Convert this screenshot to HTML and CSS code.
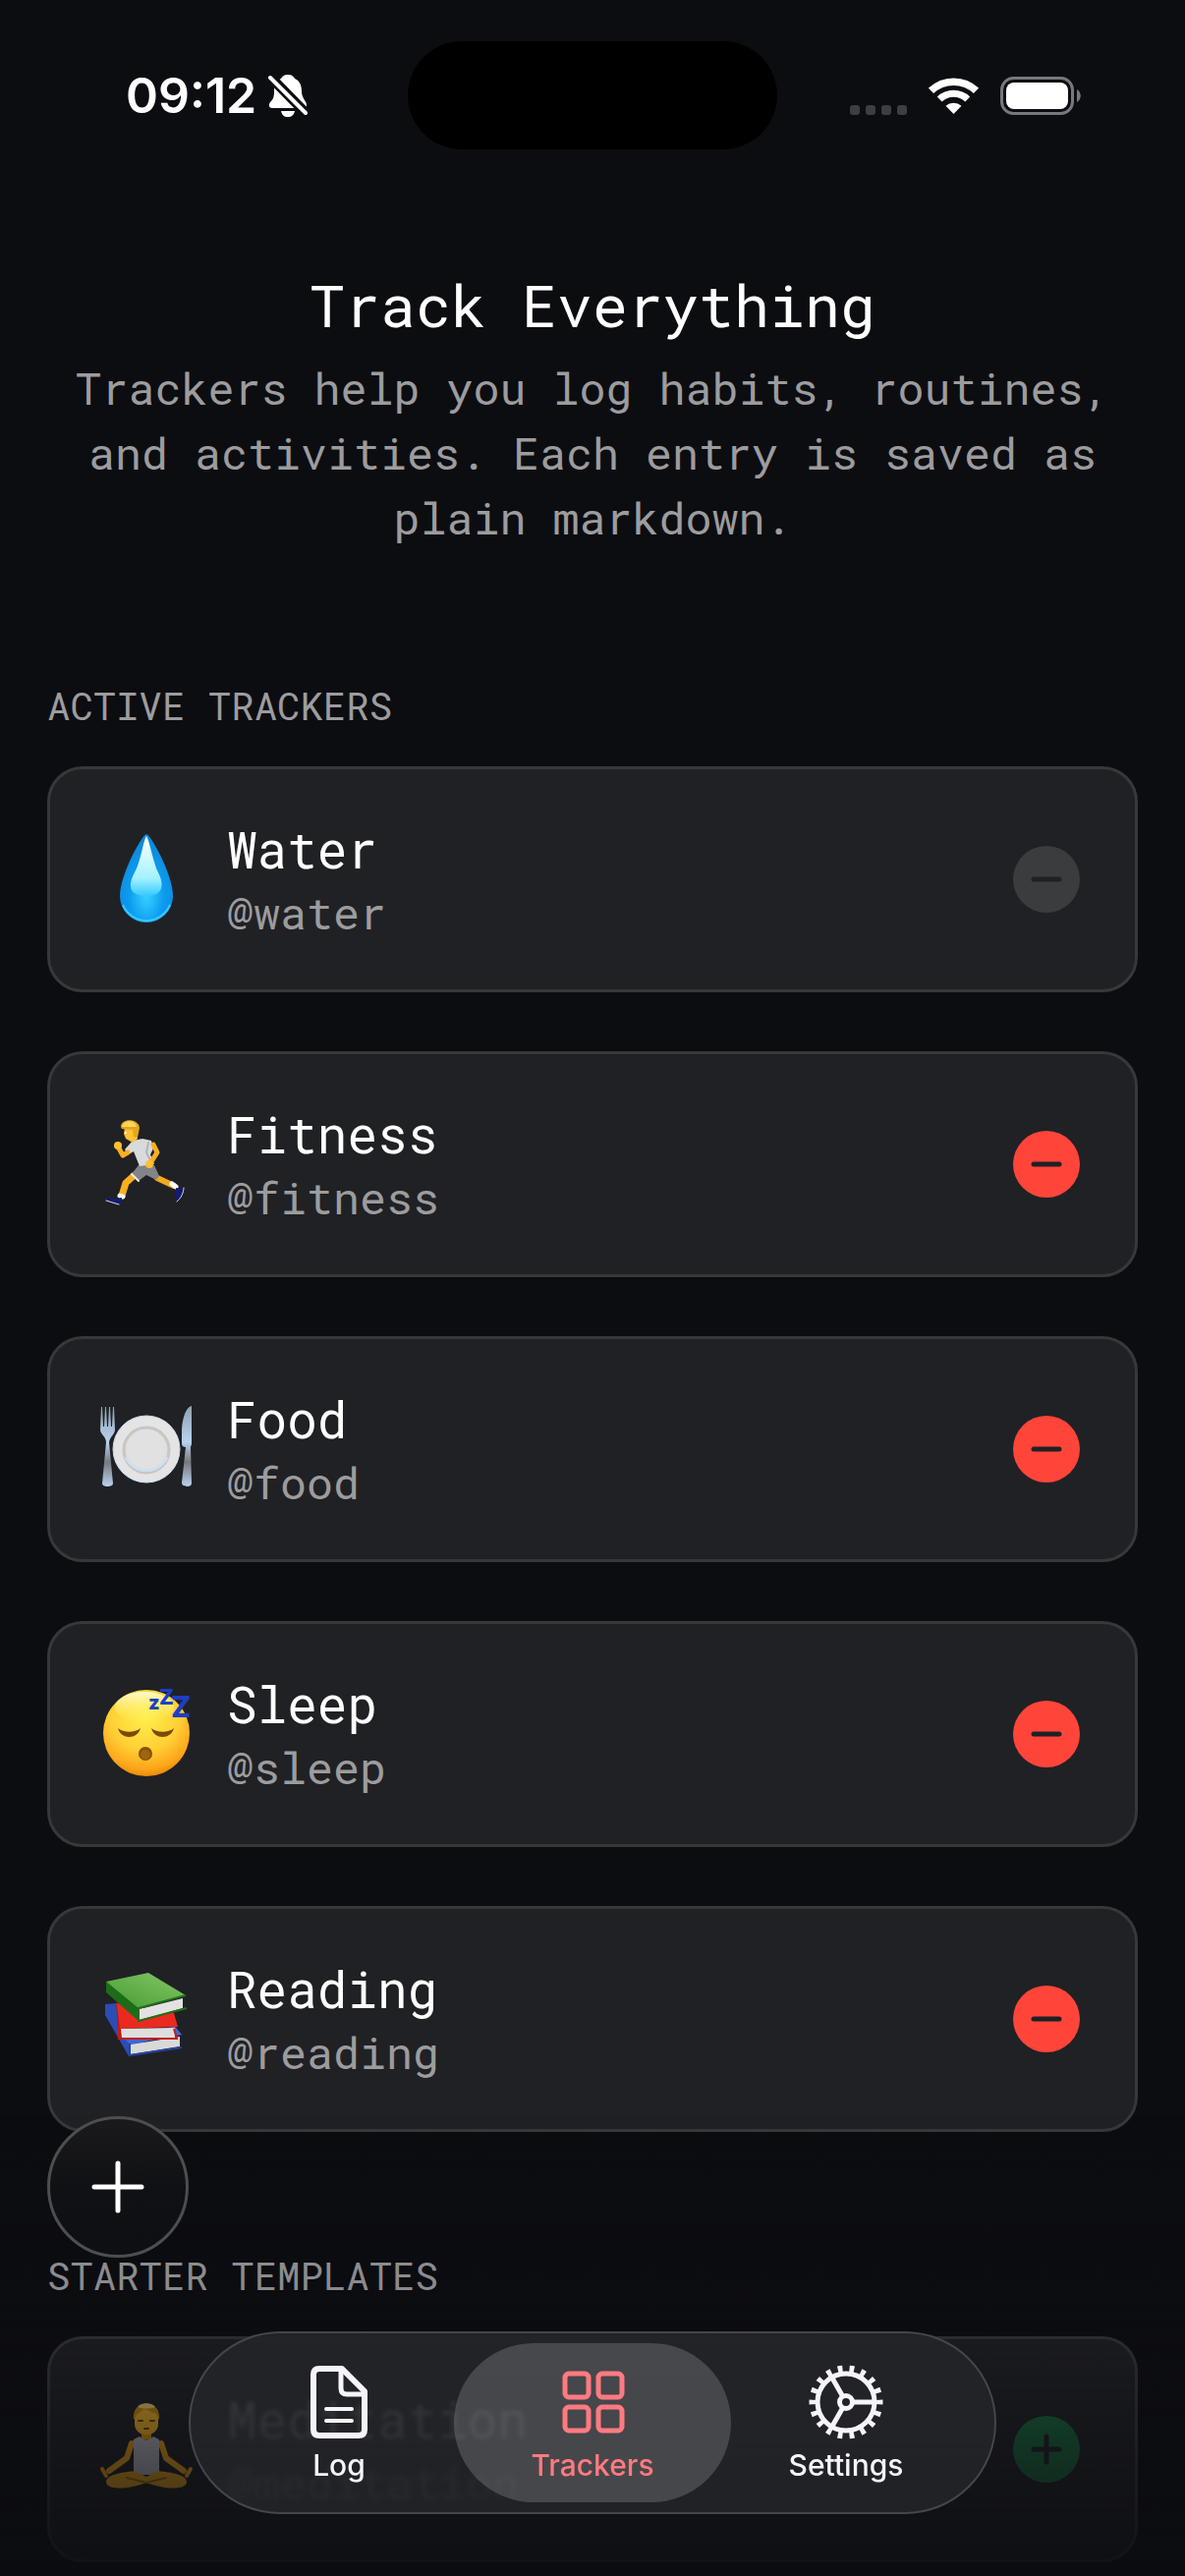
FILE: index.html
```html
<!DOCTYPE html>
<html lang="en">
<head>
    <meta charset="UTF-8">
    <meta name="viewport" content="width=device-width, initial-scale=1.0">
    <title>Trackers</title>
    <link rel="stylesheet" href="styles.css">
</head>
<body>
    <!-- Shared icons -->
    <svg class="defs" width="0" height="0" aria-hidden="true">
        <symbol id="icon-minus" viewBox="0 0 68 68">
            <path d="M21 34h26" stroke="currentColor" stroke-width="5" stroke-linecap="round"/>
        </symbol>
        <symbol id="icon-plus" viewBox="0 0 68 68">
            <path d="M21 34h26M34 21v26" stroke="currentColor" stroke-width="5" stroke-linecap="round"/>
        </symbol>
    </svg>

    <div class="status-bar">
        <div class="status-left">
            <span class="time">09:12</span>
            <svg class="bell" viewBox="0 0 40 43">
                <path fill="#fff" d="M20 0C24 0 26 2 27 4C32 6 34 11 34 17C34 24 39 27 39 31C39 33 38 34 36 34H4C1 34 0 31 2 28C5 25 6 23 6 17C6 11 8 6 13 4C14 2 16 0 20 0ZM13 37H27C26 41 24 43 20 43C16 43 14 41 13 37Z"/>
                <path d="M1 1L40 41" stroke="#0c0d11" stroke-width="10"/>
                <path d="M2 3L38 39" stroke="#fff" stroke-width="4" stroke-linecap="round"/>
            </svg>
        </div>
        <div class="island"></div>
        <div class="status-right">
            <div class="dots"><i></i><i></i><i></i><i></i></div>
            <svg class="wifi" viewBox="0 0 51 37" fill="none" stroke="#fff">
                <path d="M2.5 13.4A33.2 33.2 0 0 1 48.5 13.4" stroke-width="7.5"/>
                <path d="M11.2 22A20.7 20.7 0 0 1 39.8 22" stroke-width="7"/>
                <path d="M25.5 37L17.5 28.8A12 12 0 0 1 33.5 28.8Z" fill="#fff" stroke="none"/>
            </svg>
            <svg class="battery" viewBox="0 0 82 39">
                <rect x="1.5" y="1.5" width="72" height="36" rx="12" fill="none" stroke="#77787b" stroke-width="3"/>
                <rect x="6" y="6" width="63" height="27" rx="8" fill="#fff"/>
                <path d="M78 13C83 16 83 23 78 26Z" fill="#77787b"/>
            </svg>
        </div>
    </div>

    <main>
        <section class="intro">
            <h1>Track Everything</h1>
            <p>Trackers help you log habits, routines, and activities. Each entry is saved as plain markdown.</p>
        </section>

        <section class="group">
            <h2>ACTIVE TRACKERS</h2>
            <div class="card-list">
                <article class="card">
                    <svg class="emoji" viewBox="0 0 100 100">
                        <defs>
                            <radialGradient id="drop" cx=".5" cy=".7" r=".65">
                                <stop offset="0" stop-color="#38d0ff"/>
                                <stop offset=".5" stop-color="#0c9cf0"/>
                                <stop offset="1" stop-color="#0d86d8"/>
                            </radialGradient>
                            <linearGradient id="shine" x2="0" y2="1">
                                <stop offset="0" stop-color="#fff"/>
                                <stop offset=".7" stop-color="#a4f2ff"/>
                                <stop offset="1" stop-color="#36c8ff"/>
                            </linearGradient>
                        </defs>
                        <path fill="url(#drop)" d="M50 4C54 4 77 45 77 67A27 27 0 0 1 23 67C23 45 46 4 50 4Z"/>
                        <path fill="none" stroke="#3cc6ff" stroke-width="2" d="M26 76A26 26 0 0 0 74 76"/>
                        <path fill="url(#shine)" d="M50 6C53 10 57 33 62 43C68 55 68 67 50 67C32 67 31 56 38 43C44 33 47 10 50 6Z"/>
                    </svg>
                    <div class="card-text">
                        <h3>Water</h3>
                        <p>@water</p>
                    </div>
                    <button class="round-button disabled" aria-label="Remove Water" disabled><svg><use href="#icon-minus"/></svg></button>
                </article>

                <article class="card">
                    <svg class="emoji" viewBox="0 0 100 100" stroke-linecap="round" stroke-linejoin="round">
                        <path d="M61 64L78 72" stroke="#f5a81c" stroke-width="6" fill="none"/>
                        <path d="M76 70l4 3" stroke="#fff" stroke-width="5"/>
                        <path d="M80 74L85 75L88 72C89 77 85 84 81 88L79 86Z" fill="#141c70"/>
                        <path d="M88 74C88 79 85 85 81 88" stroke="#ddd" stroke-width="1" fill="none"/>
                        <path d="M38 61L29 69L25 82" stroke="#f8b020" stroke-width="7" fill="none"/>
                        <path d="M23 82l3 1" stroke="#fff" stroke-width="5"/>
                        <path d="M9 84L19 85L25 84L25 90L22 91L9 87Z" fill="#141c70"/>
                        <path d="M9 87L22 91" stroke="#ddd" stroke-width="1"/>
                        <path d="M42 51H58L63 62L60 66L50 61L42 67L35 60Z" fill="#828489"/>
                        <path d="M35 60L42 67" stroke="#ececec" stroke-width="2"/>
                        <path d="M36 26L46 24L55 26L57 34L54 40L58 50L43 52L37 37L32 40L28 35Z" fill="#d9dadc"/>
                        <path d="M52 28L50 38L55 48" stroke="#b4b5b8" stroke-width="2" fill="none"/>
                        <path d="M57 30L61 38L54 49" stroke="#f8b020" stroke-width="5" fill="none"/>
                        <circle cx="53" cy="50" r="4" fill="#fdc030"/>
                        <path d="M31 38L26 41L21 32" stroke="#f8b020" stroke-width="5" fill="none"/>
                        <circle cx="21" cy="31" r="4" fill="#fdc030"/>
                        <path d="M28 12L40 12L41 24L36 28L29 24L27 19Z" fill="#fdc236"/>
                        <path d="M24 12C24 3 42 3 43 13L41 23L37 22L36 15L25 14Z" fill="#e6a51c"/>
                        <path d="M25 12C27 4 39 5 40 12Z" fill="#ffd65a"/>
                        <circle cx="29" cy="18" r="1" fill="#fff"/>
                    </svg>
                    <div class="card-text">
                        <h3>Fitness</h3>
                        <p>@fitness</p>
                    </div>
                    <button class="round-button remove" aria-label="Remove Fitness"><svg><use href="#icon-minus"/></svg></button>
                </article>

                <article class="card">
                    <svg class="emoji" viewBox="0 0 100 100">
                        <defs>
                            <linearGradient id="steel" x2="0" y2="1">
                                <stop offset="0" stop-color="#90a2b3"/>
                                <stop offset=".45" stop-color="#b8d2ee"/>
                                <stop offset=".7" stop-color="#77797d"/>
                                <stop offset="1" stop-color="#b9d2f0"/>
                            </linearGradient>
                        </defs>
                        <path fill="url(#steel)" d="M4 7H5L6 27H7L8 7H9L10 27H11L12 7H13L14 27H15L16 7H17L18 30C18 35 13 37 12 43L16 85C16 89 5 89 5 85L9 43C9 37 3 35 3 30Z"/>
                        <circle cx="50" cy="50" r="34" fill="#e4e4e5" stroke="#c9dcf0" stroke-width="1"/>
                        <circle cx="50" cy="51" r="23" fill="#dedede" stroke="#c9c6c2" stroke-width="3"/>
                        <path d="M29 58A23 23 0 0 0 71 58" fill="none" stroke="#cfdff2" stroke-width="3"/>
                        <circle cx="50" cy="50" r="20" fill="#e1e1e2"/>
                        <path fill="url(#steel)" d="M96 6C89 8 86 22 86 34V45C86 47 88 48 90 48L86 84C86 89 96 89 96 85L95 48L96 45Z"/>
                    </svg>
                    <div class="card-text">
                        <h3>Food</h3>
                        <p>@food</p>
                    </div>
                    <button class="round-button remove" aria-label="Remove Food"><svg><use href="#icon-minus"/></svg></button>
                </article>

                <article class="card">
                    <svg class="emoji" viewBox="0 0 100 100">
                        <defs>
                            <radialGradient id="face" cx=".48" cy=".3" r=".72">
                                <stop offset="0" stop-color="#fff04c"/>
                                <stop offset=".55" stop-color="#ffd035"/>
                                <stop offset=".85" stop-color="#fda61a"/>
                                <stop offset="1" stop-color="#e88508"/>
                            </radialGradient>
                            <linearGradient id="glow" x2="0" y2="1">
                                <stop offset="0" stop-color="#fffbd0"/>
                                <stop offset="1" stop-color="#fff04c" stop-opacity="0"/>
                            </linearGradient>
                        </defs>
                        <circle cx="50" cy="49" r="44" fill="url(#face)"/>
                        <ellipse cx="48" cy="23" rx="30" ry="16" fill="url(#glow)"/>
                        <path fill="#7c4a05" d="M21 44C27 49 38 49 44 44C41 56 24 56 21 44ZM55 44C61 49 72 49 78 44C75 56 58 56 55 44Z"/>
                        <circle cx="49" cy="70" r="7" fill="#855006"/>
                        <circle cx="49" cy="71" r="5" fill="#9d650c"/>
                        <g class="snore">
                            <text x="52" y="25" font-size="20">z</text>
                            <text x="63" y="20" font-size="22">Z</text>
                            <text x="75" y="33" font-size="30">Z</text>
                        </g>
                    </svg>
                    <div class="card-text">
                        <h3>Sleep</h3>
                        <p>@sleep</p>
                    </div>
                    <button class="round-button remove" aria-label="Remove Sleep"><svg><use href="#icon-minus"/></svg></button>
                </article>

                <article class="card">
                    <svg class="emoji" viewBox="0 0 100 100">
                        <defs>
                            <linearGradient id="cover" x1="1" x2="0" y2="1">
                                <stop offset="0" stop-color="#86c865"/>
                                <stop offset="1" stop-color="#449b33"/>
                            </linearGradient>
                        </defs>
                        <path fill="#2b4db4" d="M8 35L20 34L34 72L86 66L79 57L60 62L32 88L8 46Z"/>
                        <path fill="#3f67d4" d="M28 70L79 58L86 66L33 76Z"/>
                        <path fill="#d9d9d9" d="M34 76L84 68V78L34 86Z"/>
                        <path fill="none" stroke="#2443a4" stroke-width="2" d="M33 75V87L86 79"/>
                        <path fill="#b81814" d="M19 33L24 36L26 70L22 68Z"/>
                        <path fill="#ea2a1e" d="M20 34L78 44L82 58L23 60Z"/>
                        <path fill="#dedede" d="M24 60L79 59V69L25 70Z"/>
                        <path fill="none" stroke="#c81b16" stroke-width="2" d="M22 58V70H81L78 60"/>
                        <path fill="#1d6d17" d="M9 12L9 23L42 52L42 38Z"/>
                        <path fill="url(#cover)" d="M9 12L52 3L90 26L42 39Z"/>
                        <path fill="#e2e2e2" d="M43 40L87 29V39L43 51Z"/>
                        <path fill="none" stroke="#1e7018" stroke-width="2" d="M90 26L42 39V52L91 39"/>
                    </svg>
                    <div class="card-text">
                        <h3>Reading</h3>
                        <p>@reading</p>
                    </div>
                    <button class="round-button remove" aria-label="Remove Reading"><svg><use href="#icon-minus"/></svg></button>
                </article>
            </div>
        </section>

        <section class="group">
            <h2>STARTER TEMPLATES</h2>
            <div class="card-list">
                <article class="card">
                    <svg class="emoji" viewBox="0 0 100 100" stroke-linecap="round" stroke-linejoin="round">
                        <path d="M45 30H55V40H45Z" fill="#e09a10"/>
                        <path d="M35 44L30 59L12 72" stroke="#e9a116" stroke-width="6" fill="none"/>
                        <path d="M65 44L70 59L88 72" stroke="#e9a116" stroke-width="6" fill="none"/>
                        <path d="M37 40L43 37Q50 44 57 37L63 40V76H37Z" fill="#b4b4be"/>
                        <path d="M38 72C22 74 10 76 9 83C9 92 32 91 50 84C68 91 91 92 91 83C90 76 78 74 62 72L50 78Z" fill="#e5a31a"/>
                        <path d="M30 79L50 84L70 79" stroke="#a06a06" stroke-width="2" fill="none"/>
                        <path d="M5 70L9 77M95 70L91 77" stroke="#e9a116" stroke-width="4"/>
                        <path d="M38 16C38 2 62 2 62 16V24C62 39 38 39 38 24Z" fill="#f2b424"/>
                        <path d="M37 20C34 -2 66 -2 63 20L60 14L48 9L40 15Z" fill="#c98d10"/>
                        <path d="M41 7C44 2 56 2 59 7C54 9 46 9 41 7Z" fill="#f3cf70"/>
                        <path d="M42 21H46M54 21H58M48 29H52" stroke="#6d4104" stroke-width="2"/>
                    </svg>
                    <div class="card-text">
                        <h3>Meditation</h3>
                        <p>@meditation</p>
                    </div>
                    <button class="round-button add" aria-label="Add Meditation"><svg><use href="#icon-plus"/></svg></button>
                </article>
            </div>
        </section>
    </main>

    <div class="fade"></div>

    <button class="new-tracker" aria-label="New tracker">
        <svg viewBox="0 0 54 54"><path d="M3 27h48M27 3v48" stroke="#fff" stroke-width="5" stroke-linecap="round"/></svg>
    </button>

    <nav class="tab-bar">
        <a class="tab" href="#log">
            <svg viewBox="0 0 76 76" fill="none" stroke="currentColor" stroke-width="6" stroke-linejoin="round" stroke-linecap="round">
                <path d="M18 4H41L64 27V66Q64 72 58 72H18Q12 72 12 66V10Q12 4 18 4Z"/>
                <path d="M40 5V24Q40 30 46 30H63" stroke-width="5"/>
                <path d="M25 45H51M25 57H51" stroke-width="4"/>
            </svg>
            <span>Log</span>
        </a>
        <a class="tab active" href="#trackers" aria-current="page">
            <svg viewBox="0 0 76 76" fill="none" stroke="currentColor" stroke-width="5">
                <rect x="10" y="9" width="24" height="24" rx="4"/>
                <rect x="44" y="9" width="24" height="24" rx="4"/>
                <rect x="10" y="43" width="24" height="24" rx="4"/>
                <rect x="44" y="43" width="24" height="24" rx="4"/>
            </svg>
            <span>Trackers</span>
        </a>
        <a class="tab" href="#settings">
            <svg viewBox="-38 -38 76 76" fill="none" stroke="currentColor">
                <circle r="34" stroke-width="7" pathLength="180" stroke-dasharray="4 6" stroke-dashoffset="2"/>
                <circle r="29" stroke-width="5"/>
                <circle r="6.5" stroke-width="5"/>
                <path d="M8 0H28M-4 -7L-14 -24.5M-4 7L-14 24.5" stroke-width="5"/>
            </svg>
            <span>Settings</span>
        </a>
    </nav>
</body>
</html>
```
FILE: styles.css
```css
* {
    box-sizing: border-box;
}
body {
    margin: 0;
    background-color: #0c0d11;
    color: #fff;
    font-family: "Roboto Mono", "DejaVu Sans Mono", monospace;
}
h1, h2, h3, p {
    margin: 0;
    font-weight: 400;
}
button {
    padding: 0;
    border: none;
    cursor: pointer;
}
svg {
    display: block;
}
.defs {
    position: absolute;
}

/* Status bar */
.status-bar {
    display: grid;
    grid-template-columns: 1fr 376px 1fr;
    align-items: center;
    padding-top: 42px;
}
.status-left {
    display: flex;
    align-items: center;
    gap: 12px;
    padding-left: 128px;
}
.time {
    font-family: Inter, sans-serif;
    font-size: 50px;
    font-weight: 600;
    line-height: 60px;
}
.bell {
    width: 40px;
    height: 43px;
}
.island {
    height: 110px;
    border-radius: 55px;
    background-color: #000;
}
.status-right {
    display: flex;
    justify-content: flex-end;
    align-items: center;
    gap: 22px;
    padding-right: 106px;
}
.dots {
    display: flex;
    align-self: flex-end;
    gap: 6px;
}
.dots i {
    width: 10px;
    height: 10px;
    border-radius: 3px;
    background-color: #3d3e41;
}
.wifi {
    width: 51px;
    height: 37px;
}
.battery {
    width: 82px;
    height: 39px;
}

/* Content */
main {
    padding: 122px 48px 0;
}
.intro {
    display: flex;
    flex-direction: column;
    gap: 16px;
    text-align: center;
}
.intro h1 {
    font-size: 60px;
    line-height: 72px;
}
.intro p {
    color: #9c9c9e;
    font-size: 45px;
    line-height: 66px;
}
.group {
    display: flex;
    flex-direction: column;
    gap: 38px;
    padding-top: 134px;
}
.group + .group {
    padding-top: 122px;
}
.group h2 {
    color: #9c9c9e;
    font-size: 39px;
    line-height: 48px;
}
.card-list {
    display: flex;
    flex-direction: column;
    gap: 60px;
}
.card {
    display: flex;
    align-items: center;
    gap: 32px;
    min-height: 230px;
    padding: 48px 56px 48px 48px;
    border: 3px solid #37383a;
    border-radius: 36px;
    background-color: #202124;
}
.emoji {
    width: 100px;
    height: 100px;
}
.snore {
    fill: #1c3fc4;
    font-family: Inter, sans-serif;
    font-weight: 800;
}
.card-text {
    flex: 1;
}
.card-text h3 {
    font-size: 51px;
    line-height: 68px;
}
.card-text p {
    color: #9c9c9e;
    font-size: 45px;
    line-height: 60px;
}
.round-button {
    width: 68px;
    height: 68px;
    border-radius: 50%;
    color: #202124;
}
.round-button svg {
    width: 68px;
    height: 68px;
}
.disabled {
    background-color: #3b3c3e;
}
.remove {
    background-color: #ff453a;
}
.add {
    background-color: #1a6c3c;
}

/* Floating controls */
.fade {
    position: fixed;
    left: 0;
    right: 0;
    bottom: 0;
    height: 472px;
    background: linear-gradient(rgba(12, 13, 17, 0), rgba(12, 13, 17, 0.12) 38%, rgba(12, 13, 17, 0.28) 48%, rgba(12, 13, 17, 0.6) 73%, rgba(12, 13, 17, 0.85) 97%);
    pointer-events: none;
}
.new-tracker {
    position: fixed;
    left: 48px;
    bottom: 324px;
    display: flex;
    justify-content: center;
    align-items: center;
    width: 144px;
    height: 144px;
    border: 3px solid #4d4e50;
    border-radius: 50%;
    background: linear-gradient(#1a1a1c, #101114 50%, #0e0f13);
}
.new-tracker svg {
    width: 54px;
    height: 54px;
}
.tab-bar {
    position: fixed;
    left: 50%;
    bottom: 63px;
    display: flex;
    padding: 10px;
    border: 2px solid #44464e;
    border-radius: 93px;
    background-color: rgba(36, 37, 41, 0.86);
    backdrop-filter: blur(2px);
    transform: translateX(-50%);
}
.tab {
    display: flex;
    flex-direction: column;
    align-items: center;
    width: 282px;
    height: 162px;
    padding-top: 22px;
    border-radius: 81px;
    color: #f4f4fa;
    font-family: Inter, sans-serif;
    font-size: 30px;
    font-weight: 500;
    line-height: 36px;
    text-decoration: none;
}
.tab + .tab {
    margin-left: -24px;
}
.tab svg {
    width: 76px;
    height: 76px;
    margin-bottom: 8px;
}
.tab.active {
    background-color: rgba(255, 255, 255, 0.17);
    color: #ff7a80;
}
```
